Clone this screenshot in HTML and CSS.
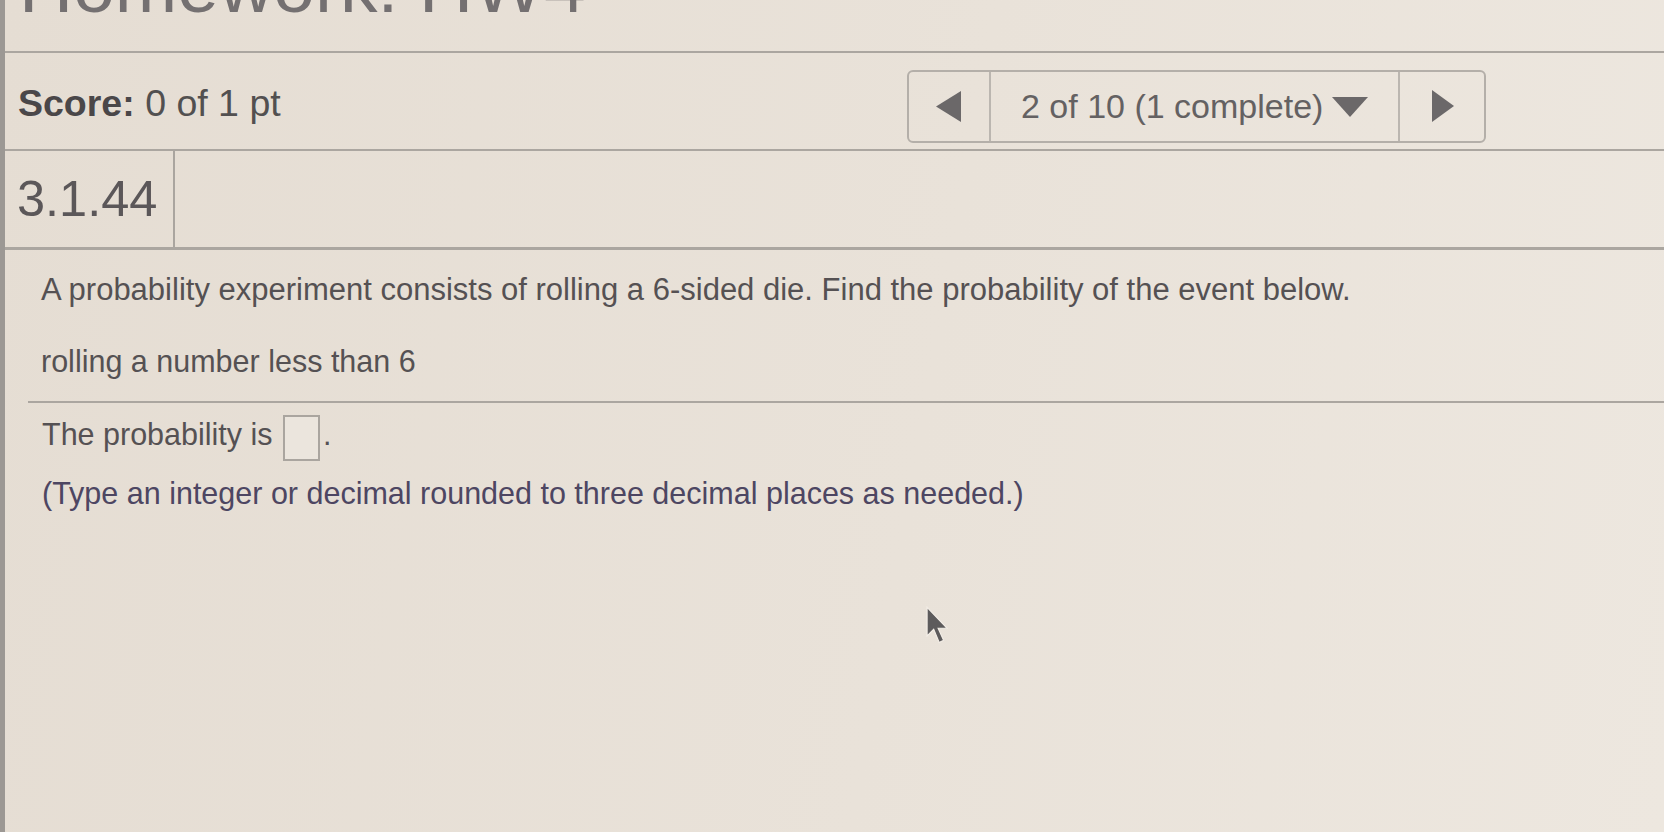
FILE: index.html
```html
<!DOCTYPE html>
<html lang="en">
<head>
<meta charset="utf-8">
<title>Homework: HW4</title>
<link rel="stylesheet" href="styles.css">
</head>
<body>
<div class="page">
  <header class="title"><span class="title-text">Homework: HW4</span></header>

  <div class="scorebar">
    <div class="score"><b>Score:</b> 0 of 1 pt</div>
    <nav class="pager">
      <div class="pg-cell pg-prev">
        <svg width="26" height="31" viewBox="0 0 26 31"><path d="M25 0 L25 31 L0 15.5 Z" fill="#6b6869"/></svg>
      </div>
      <div class="pg-cell pg-mid">
        <span class="pg-text">2 of 10 (1 complete)</span>
        <svg class="pg-drop" width="36" height="20" viewBox="0 0 36 20"><path d="M0 0 L36 0 L18 20 Z" fill="#6b6869"/></svg>
      </div>
      <div class="pg-cell pg-next">
        <svg width="22" height="32" viewBox="0 0 22 32"><path d="M0 0 L22 16 L0 32 Z" fill="#6b6869"/></svg>
      </div>
    </nav>
  </div>

  <div class="qid"><span class="qnum">3.1.44</span></div>

  <section class="question">
    <p class="stem">A probability experiment consists of rolling a 6-sided die. Find the probability of the event below.</p>
    <p class="event">rolling a number less than 6</p>
  </section>

  <section class="answer">
    <p class="ans-line">The probability is <span class="ansbox"></span><span class="dot">.</span></p>
    <p class="hint">(Type an integer or decimal rounded to three decimal places as needed.)</p>
  </section>

  <svg class="cursor" width="22" height="40" viewBox="0 0 20 36"><path d="M1 1 L1 27 L7 21 L12 33 L16 31 L11 20 L19 20 Z" fill="#5d5b5c" stroke="#f4efe8" stroke-width="1"/></svg>
</div>
</body>
</html>
```

FILE: styles.css
```css
* { box-sizing: border-box; }
html, body { margin: 0; padding: 0; }
body {
  width: 1664px;
  height: 832px;
  overflow: hidden;
  font-family: "Liberation Sans", Arial, sans-serif;
  background: #e7dfd5;
}
p { margin: 0; }

.page {
  position: relative;
  height: 832px;
  border-left: 5px solid #9c9894;
  background: linear-gradient(100deg, #e5ddd3 0%, #e9e2d9 55%, #ede7df 100%);
  color: #545052;
}

.title {
  height: 53px;
  overflow: hidden;
  border-bottom: 2px solid #aba6a0;
  padding-left: 14px;
}
.title-text {
  display: block;
  font-size: 75px;
  line-height: 75px;
  margin-top: -51px;
  color: #747071;
}

.scorebar {
  height: 98px;
  padding: 10px 178px 0 13px;
  display: flex;
  align-items: center;
  justify-content: space-between;
  border-bottom: 2px solid #aba6a0;
}
.score {
  font-size: 37.5px;
  line-height: 1;
  margin-bottom: 5px;
  color: #525050;
}
.score b { color: #4a4749; }

.pager {
  display: flex;
  width: 579px;
  height: 73px;
  border: 2px solid #b4afa9;
  border-radius: 6px;
}
.pg-cell {
  display: flex;
  align-items: center;
}
.pg-prev {
  width: 80px;
  justify-content: flex-start;
  padding-left: 27px;
}
.pg-mid {
  width: 411px;
  border-left: 2px solid #bbb6b0;
  border-right: 2px solid #bbb6b0;
  padding-left: 30px;
  gap: 9px;
}
.pg-text {
  font-size: 34px;
  color: #646162;
}
.pg-drop { margin-top: 2px; }
.pg-next {
  flex: 1;
  padding-left: 32px;
}

.qid {
  height: 99px;
  display: flex;
  border-bottom: 3px solid #aba6a0;
}
.qnum {
  display: flex;
  align-items: center;
  padding: 0 14px 2px 12px;
  width: 170px;
  border-right: 2px solid #aaa59f;
  font-size: 50.5px;
  color: #5b5759;
}

.question {
  margin-left: 23px;
  padding: 22px 0 22px 13px;
  border-bottom: 2px solid #aba6a0;
  font-size: 30.5px;
  line-height: 36px;
}
.stem {
  font-size: 31px;
  color: #555153;
}
.event {
  margin-top: 35px;
  color: #555153;
}

.answer {
  margin-left: 23px;
  padding: 12px 0 0 14px;
  font-size: 30.5px;
  line-height: 36px;
}
.ans-line { color: #555153; }
.ansbox {
  display: inline-block;
  width: 37px;
  height: 46px;
  margin-left: 2px;
  vertical-align: -16px;
  border: 2px solid #aaa59f;
  background: #ebe5dd;
}
.dot { margin-left: 3px; }
.hint {
  margin-top: 14px;
  color: #4d4662;
}

.cursor {
  position: absolute;
  left: 921px;
  top: 606px;
}
```
